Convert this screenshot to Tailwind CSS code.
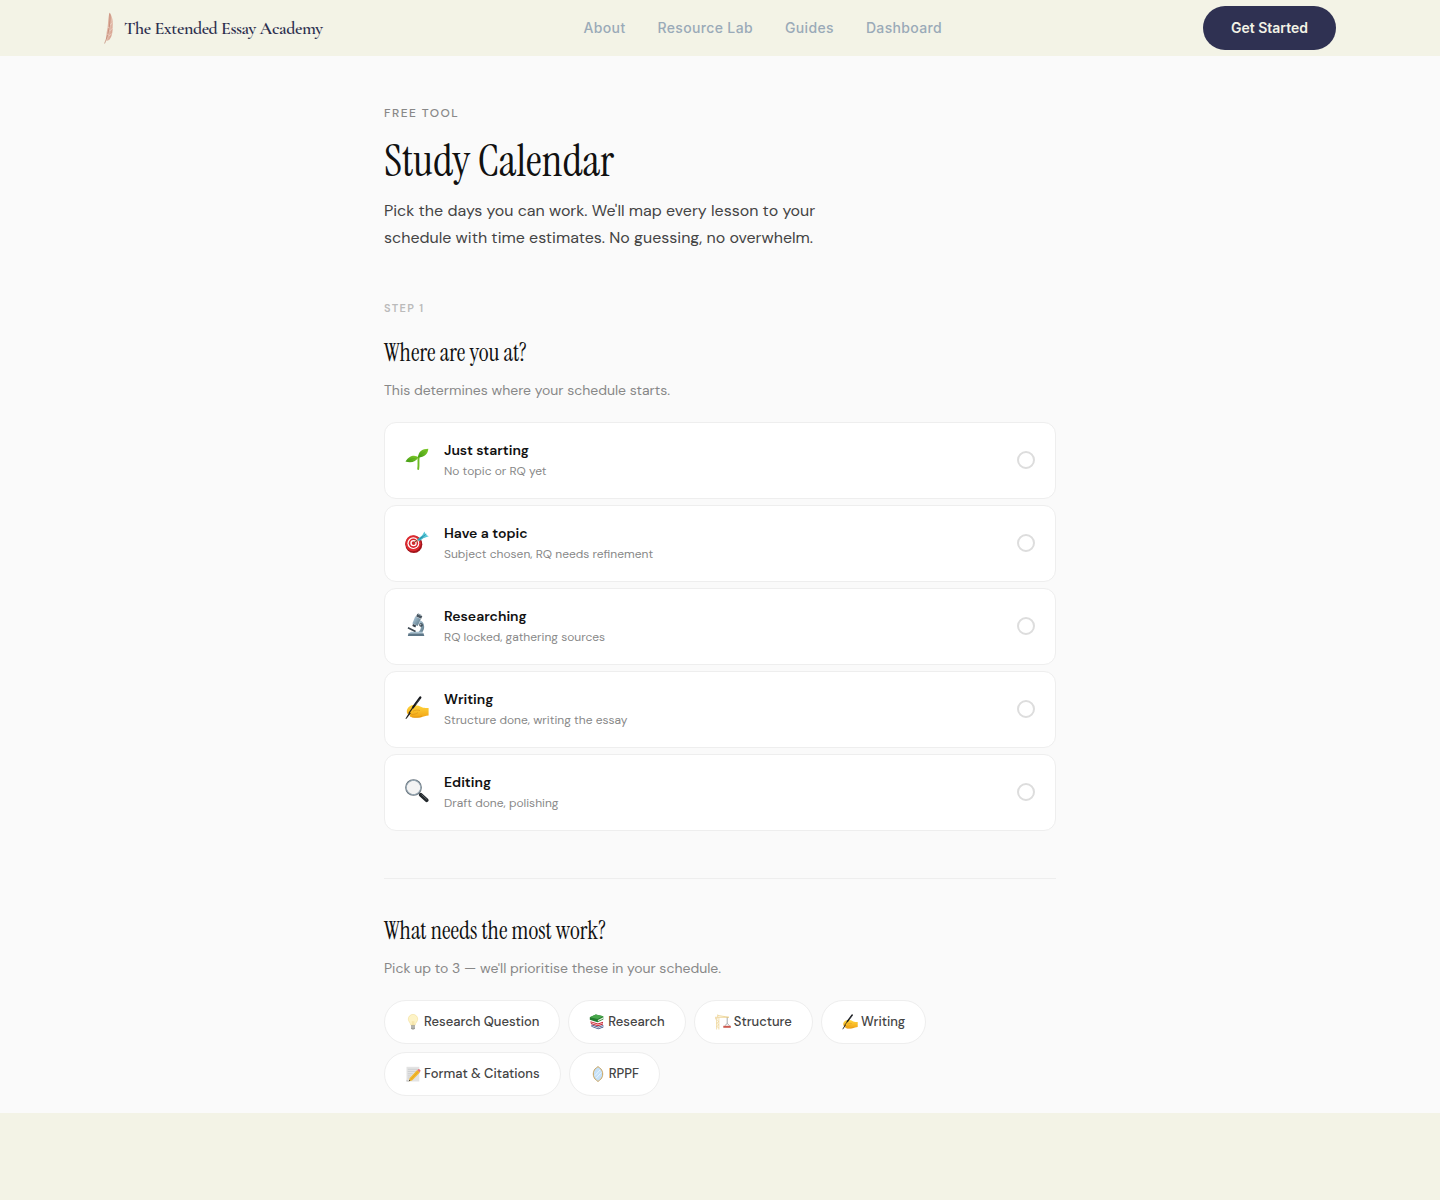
<!DOCTYPE html>
<html lang="en">
<head>
<meta charset="utf-8">
<meta name="viewport" content="width=device-width, initial-scale=1">
<title>Study Calendar – The Extended Essay Academy</title>
<script src="https://cdn.jsdelivr.net/npm/@tailwindcss/browser@4"></script>
</head>
<body class="min-h-screen bg-[#f3f3e6] font-['DM_Sans',Inter,sans-serif] text-[#111111] antialiased">

<!-- Shared artwork -->
<svg class="absolute size-0" aria-hidden="true">
  <defs>
    <linearGradient id="leaf" x1="0" y1="1" x2="1" y2="0"><stop offset="0" stop-color="#3f9a12"/><stop offset="1" stop-color="#86cf2c"/></linearGradient>
    <linearGradient id="skin" x1="0" y1="0" x2="0" y2="1"><stop offset="0" stop-color="#ffd53d"/><stop offset="1" stop-color="#f2a414"/></linearGradient>
    <linearGradient id="steel" x1="0" y1="0" x2="1" y2="1"><stop offset="0" stop-color="#b9d3e4"/><stop offset="1" stop-color="#54707f"/></linearGradient>
    <linearGradient id="feather" x1="0" y1="0" x2="1" y2="1"><stop offset="0" stop-color="#d39a86"/><stop offset="0.55" stop-color="#e3bdac"/><stop offset="1" stop-color="#c98571"/></linearGradient>
  </defs>
  <symbol id="writing" viewBox="0 0 24 24">
    <path d="M2.200 13.200C3.500 10.500 6.500 8.600 9.500 9.200c2.500-.2 5 .6 7.500 2 2 .9 4 .6 6.600.7v7.700c-3 .1-5 1.400-8 1.800-3.600.5-7.800.5-9.800-.4-1.200-.6-1.300-1.600-.4-2.300-2-.1-3.400-.9-3.500-2.200-.1-1.400-.2-2.200.3-3.300z" fill="url(#skin)"/>
    <path d="M8 15.200c2-1.200 4.500-1.500 7-.6M6 18.600c2.500.1 5-.6 7-2M7 21c3.400.5 7 .2 10-.9" fill="none" stroke="#d98f18" stroke-width=".6"/>
    <path d="M15.300 1.500L8 11.300" stroke="#16181c" stroke-width="2.200" stroke-linecap="round"/>
    <path d="M14.800 3.200L10.800 8.600" stroke="#59606a" stroke-width=".6"/>
    <path d="M8 11.300L4 17" stroke="#2a2415" stroke-width="1.200"/>
    <path d="M4.400 16L.4 22.700l1.100.1 4.300-5.500z" fill="#222"/>
  </symbol>
</svg>

<header class="bg-[#f3f3e6]">
  <nav class="mx-auto flex h-14 max-w-7xl items-center justify-between px-6" aria-label="Main">
    <a href="#" class="flex items-center gap-2">
      <svg class="h-8 w-3" viewBox="0 0 12 32" aria-hidden="true">
        <path d="M5.500.4C8.600 4.500 9.400 9.500 8.600 14.500 8.800 19 8.200 24 5.600 27.600 4.400 28.600 3 29 2.400 28.800 1.800 25 2.600 20 3.600 15.500 4.200 10 4.400 4.500 5.500.4z" fill="url(#feather)"/>
        <path d="M5.900 1.500C6.500 10 5 21 .6 31.500" fill="none" stroke="#b5705c" stroke-width=".6"/>
        <path d="M8.600 10.500L6.300 13M8.700 16L5.700 19M8 21.500L4.800 24M3.800 15l1.800 1M2.600 22l1.700.5" stroke="#f6e6dc" stroke-width=".5"/>
      </svg>
      <span class="font-['Cormorant_Garamond','Liberation_Serif',serif] text-lg font-semibold tracking-tight text-[#2d2f4e]">The Extended Essay Academy</span>
    </a>
    <div class="flex items-center gap-8 font-[Inter,sans-serif] text-sm font-medium tracking-wide text-[#9aaab8]">
      <a href="#">About</a>
      <a href="#">Resource Lab</a>
      <a href="#">Guides</a>
      <a href="#">Dashboard</a>
    </div>
    <button type="button" class="h-11 rounded-full bg-[#2f3152] px-7 font-[Inter,sans-serif] text-sm font-semibold text-[#f3f3e6]">Get Started</button>
  </nav>
</header>

<main class="bg-[#fafafa] pt-12 pb-[17px]">
  <div class="mx-auto max-w-2xl">
    <p class="text-xs leading-[18px] font-medium tracking-[0.12em] text-[#888888]">FREE TOOL</p>
    <h1 class="mt-[15px] font-['Instrument_Serif','Liberation_Serif',serif] text-[44px] leading-12">Study Calendar</h1>
    <p class="mt-3 max-w-[480px] text-base leading-[27px] text-[#444444]">Pick the days you can work. We'll map every lesson to your schedule with time estimates. No guessing, no overwhelm.</p>

    <section class="pt-[49px]">
      <p class="text-[11px] leading-4 font-semibold tracking-[0.12em] text-[#bbbbbb]">STEP 1</p>
      <h2 id="stage" class="mt-[21px] font-['Instrument_Serif','Liberation_Serif',serif] text-2xl leading-8">Where are you at?</h2>
      <p class="mt-2.5 text-sm leading-[22px] text-[#888888]">This determines where your schedule starts.</p>

      <div class="mt-[21px] flex flex-col gap-1.5" role="radiogroup" aria-labelledby="stage">
        <label class="flex items-center gap-[15px] rounded-xl border border-[#eeeeee] bg-white px-5 pt-4 pb-[17px]">
          <svg class="mb-0.5 size-6 shrink-0" viewBox="0 0 24 24" aria-hidden="true">
            <path d="M13.800 9.500c-.8 3.500.2 7.500-.6 12.500" fill="none" stroke="#6dbb22" stroke-width="1.900" stroke-linecap="round"/>
            <path d="M13.200 10.500C13 5 17 1.800 23.300 1.800 23.200 7 19 10.600 13.200 10.500z" fill="url(#leaf)"/>
            <path d="M13.300 10.600C11 7.500 4 7.800.5 14.600c5.500 1.600 10.500.4 12.800-4z" fill="url(#leaf)"/>
            <path d="M13.400 10.300C16 7.500 19 5 22.500 2.600M13 10.800c-4 .2-8 1.600-11.500 3.400" fill="none" stroke="#4aa01a" stroke-width=".4"/>
          </svg>
          <span class="flex-1">
            <span class="block text-sm leading-[22px] font-semibold">Just starting</span>
            <span class="block text-xs leading-5 text-[#888888]">No topic or RQ yet</span>
          </span>
          <input type="radio" name="stage" class="size-[18px] shrink-0 appearance-none rounded-full border-2 border-[#dddddd] bg-white checked:border-[#2f3152] checked:bg-[#2f3152]">
        </label>

        <label class="flex items-center gap-[15px] rounded-xl border border-[#eeeeee] bg-white px-5 pt-4 pb-[17px]">
          <svg class="mb-0.5 size-6 shrink-0" viewBox="0 0 24 24" aria-hidden="true">
            <ellipse cx="8.800" cy="14.300" rx="8.500" ry="8.800" fill="#a3141b"/>
            <ellipse cx="8.100" cy="13.300" rx="7.800" ry="8" fill="#dd2a30"/>
            <circle cx="8.300" cy="13.200" r="5.900" fill="#fff"/>
            <circle cx="8.400" cy="13.200" r="4.700" fill="#d8262d"/>
            <circle cx="8.500" cy="13.100" r="3.200" fill="#fff"/>
            <circle cx="8.600" cy="13.100" r="1.900" fill="#d8262d"/>
            <path d="M8.600 13l6-4.600" stroke="#7a5a2a" stroke-width="1"/>
            <path d="M12.500 9.200l5.200-4.100 1.900 2.200-5.300 4z" fill="#3eb3c8"/>
            <path d="M17 5.800l2.400-4.300 1 2.300 1.300-.1-.4 1.400 2.500 1.100-4.800 1.900z" fill="#56c7d8"/>
            <path d="M13.300 10l7.300-5.500" stroke="#1f7f96" stroke-width=".7"/>
          </svg>
          <span class="flex-1">
            <span class="block text-sm leading-[22px] font-semibold">Have a topic</span>
            <span class="block text-xs leading-5 text-[#888888]">Subject chosen, RQ needs refinement</span>
          </span>
          <input type="radio" name="stage" class="size-[18px] shrink-0 appearance-none rounded-full border-2 border-[#dddddd] bg-white checked:border-[#2f3152] checked:bg-[#2f3152]">
        </label>

        <label class="flex items-center gap-[15px] rounded-xl border border-[#eeeeee] bg-white px-5 pt-4 pb-[17px]">
          <svg class="mb-0.5 size-6 shrink-0" viewBox="0 0 24 24" aria-hidden="true">
            <path d="M15.500 7.500c4.500 2 5 9 1 12.500h-4c4-3 4.400-7 1.500-9.500z" fill="url(#steel)"/>
            <path d="M3.500 20.200h15l.8 2.800H2.800z" fill="#5d7687"/>
            <path d="M4 20.200h14.300l-1.300-1.400H6z" fill="#a9c2d1"/>
            <path d="M10.300 3.200l5.600 2.700-3.200 7.200-5.300-2.600z" fill="url(#steel)"/>
            <path d="M12.300.8l5 2.400-1.100 2.600-5-2.300z" fill="#47545f"/>
            <path d="M13.100.3l3.500 1.700-.5 1.100-3.500-1.700z" fill="#8d9ba5"/>
            <path d="M8 11l3.200 1.600-.9 2-3-1.500z" fill="#35414b"/>
            <path d="M3.300 14.100l7.600 3.700-.7 1.400-7.600-3.700z" fill="#3b464f"/>
            <circle cx="16" cy="12" r="1.800" fill="#35414b"/>
            <circle cx="15.700" cy="11.700" r=".8" fill="#b8c6cf"/>
          </svg>
          <span class="flex-1">
            <span class="block text-sm leading-[22px] font-semibold">Researching</span>
            <span class="block text-xs leading-5 text-[#888888]">RQ locked, gathering sources</span>
          </span>
          <input type="radio" name="stage" class="size-[18px] shrink-0 appearance-none rounded-full border-2 border-[#dddddd] bg-white checked:border-[#2f3152] checked:bg-[#2f3152]">
        </label>

        <label class="flex items-center gap-[15px] rounded-xl border border-[#eeeeee] bg-white px-5 pt-4 pb-[17px]">
          <svg class="mb-0.5 size-6 shrink-0" aria-hidden="true"><use href="#writing"/></svg>
          <span class="flex-1">
            <span class="block text-sm leading-[22px] font-semibold">Writing</span>
            <span class="block text-xs leading-5 text-[#888888]">Structure done, writing the essay</span>
          </span>
          <input type="radio" name="stage" class="size-[18px] shrink-0 appearance-none rounded-full border-2 border-[#dddddd] bg-white checked:border-[#2f3152] checked:bg-[#2f3152]">
        </label>

        <label class="flex items-center gap-[15px] rounded-xl border border-[#eeeeee] bg-white px-5 pt-4 pb-[17px]">
          <svg class="mb-0.5 size-6 shrink-0" viewBox="0 0 24 24" aria-hidden="true">
            <path d="M13.800 13.800l2.300 2.200" stroke="#8b969e" stroke-width="1.800"/>
            <path d="M15.800 15.800l5.800 5.400" stroke="#22272b" stroke-width="3.800" stroke-linecap="round"/>
            <path d="M16.500 15.600l5.300 4.900" stroke="#727c84" stroke-width=".7"/>
            <circle cx="8.500" cy="8.500" r="7.600" fill="#f3f3f3" stroke="#65717a" stroke-width="1.500"/>
            <circle cx="8.500" cy="8.500" r="7.200" fill="none" stroke="#adc0cd" stroke-width=".7"/>
          </svg>
          <span class="flex-1">
            <span class="block text-sm leading-[22px] font-semibold">Editing</span>
            <span class="block text-xs leading-5 text-[#888888]">Draft done, polishing</span>
          </span>
          <input type="radio" name="stage" class="size-[18px] shrink-0 appearance-none rounded-full border-2 border-[#dddddd] bg-white checked:border-[#2f3152] checked:bg-[#2f3152]">
        </label>
      </div>
    </section>

    <section class="mt-[47px] border-t border-[#eeeeee] pt-9">
      <h2 id="focus" class="font-['Instrument_Serif','Liberation_Serif',serif] text-2xl leading-8">What needs the most work?</h2>
      <p class="mt-2.5 text-sm leading-[22px] text-[#888888]">Pick up to 3 — we'll prioritise these in your schedule.</p>

      <div class="mt-[21px] flex flex-wrap gap-2 text-[13px] font-medium text-[#444444]" role="group" aria-labelledby="focus">
        <button type="button" class="flex h-11 items-center gap-[3px] rounded-full border border-[#eeeeee] bg-white px-5">
          <svg class="size-4" viewBox="0 0 16 16" aria-hidden="true">
            <path d="M8 .4a4.700 4.700 0 0 0-4.700 4.700c0 2.400 2.100 3.400 2.600 6.100h4.200c.5-2.700 2.600-3.700 2.600-6.100A4.700 4.700 0 0 0 8 .4z" fill="#fdf3c6" stroke="#efd98b" stroke-width=".5"/>
            <path d="M7.300 7.200v4M8.800 7.200v4" fill="none" stroke="#e6c470" stroke-width=".4"/>
            <path d="M6 11.200h4v3L9 15.600H7l-1-1.400z" fill="#9b9b96"/>
            <path d="M6 12.400h4M6 13.700h4" stroke="#d4d4d0" stroke-width=".5"/>
          </svg>
          Research Question
        </button>
        <button type="button" class="flex h-11 items-center gap-[3px] rounded-full border border-[#eeeeee] bg-white px-5">
          <svg class="size-4" viewBox="0 0 16 16" aria-hidden="true">
            <path d="M2.500 10.500l7 2.200 4.800-1.600v2.400l-5 1.800-6.800-2.500z" fill="#3b4f86"/>
            <path d="M3 11.400l6.300 2.100 4.700-1.600v.8l-4.700 1.700L3 12.300z" fill="#e4e7ee"/>
            <path d="M1.400 7.300l7.400 2.200 5.200-1.800v2.700l-5 1.800-7-2.200z" fill="#c8202f"/>
            <path d="M2.200 8.300l6.700 2.100 5-1.700v.8l-5 1.700-6.500-2z" fill="#f3dede"/>
            <path d="M.8 3.200L6.800.6l7.500 1.700v3.200L8.500 8.300.8 5.700z" fill="#237c2f"/>
            <path d="M.8 3.200L6.800.6l7.500 1.700-5.600 2.800z" fill="#49a84c"/>
            <path d="M8.900 5.900l5.400-2.600v1.400L8.900 7.300z" fill="#e4f0de"/>
          </svg>
          Research
        </button>
        <button type="button" class="flex h-11 items-center gap-[3px] rounded-full border border-[#eeeeee] bg-white px-5">
          <svg class="size-4" viewBox="0 0 16 16" aria-hidden="true">
            <path d="M1.600 3.500v12M3.900 3.500v12" stroke="#ecd08a" stroke-width=".7"/>
            <path d="M1.600 6l2.300 1.600-2.300 1.600 2.300 1.600-2.300 1.600 2.300 1.600" fill="none" stroke="#edd28b" stroke-width=".6"/>
            <path d="M0 3.300h14M3 1.500L14 3.300M2.700.5v3" fill="none" stroke="#ecd08a" stroke-width=".8"/>
            <path d="M.1 3h2.400v2.400H.1z" fill="#f1ddb1"/>
            <path d="M12.200 3.500v6M12.200 9.500l-2.500 2.300M12.200 9.500l2.500 2.300" stroke="#6d7378" stroke-width=".6"/>
            <path d="M8.300 11.800h7.500v2H8.300z" fill="#cc5a50"/>
          </svg>
          Structure
        </button>
        <button type="button" class="flex h-11 items-center gap-[3px] rounded-full border border-[#eeeeee] bg-white px-5">
          <svg class="size-4" aria-hidden="true"><use href="#writing"/></svg>
          Writing
        </button>
        <button type="button" class="flex h-11 items-center gap-[3px] rounded-full border border-[#eeeeee] bg-white px-5">
          <svg class="size-4" viewBox="0 0 16 16" aria-hidden="true">
            <path d="M1.500.8h12.800v14.700H1.500z" fill="#e3e3e3"/>
            <path d="M2.800 3.300h9.500M2.800 5.500h9M2.800 7.700h5M2.800 9.900h3M2.800 12h2" stroke="#b9bcc0" stroke-width=".5"/>
            <path d="M1.500 13.800V15.500h3z" fill="#c4c4c4"/>
            <path d="M12.200 4.100l2.700 2.300-7.800 8.100-3.300.8.900-3.200z" fill="#f3b82c"/>
            <path d="M13.500 5.200L5.800 13.500" stroke="#d89a1c" stroke-width=".6"/>
            <path d="M12.200 4.100l1.100-.9c.8-.5 2.500.9 2.200 1.900l-.8 1.200z" fill="#e6747a"/>
            <path d="M4.300 13.700l-.5 1.600 1.600-.5z" fill="#333"/>
          </svg>
          Format &amp; Citations
        </button>
        <button type="button" class="flex h-11 items-center gap-[3px] rounded-full border border-[#eeeeee] bg-white px-5">
          <svg class="size-4" viewBox="0 0 16 16" aria-hidden="true">
            <path d="M8 .6c1 1.200 2 1.200 2.800 2.200 1.300 1.600 1.900 3.300 1.900 5.200s-.6 3.600-1.900 5.200C10 14.200 9 14.300 8 15.500c-1-1.200-2-1.300-2.800-2.300C3.900 11.600 3.300 9.900 3.300 8s.6-3.600 1.900-5.200C6 1.800 7 1.800 8 .6z" fill="#c5e1f8" stroke="#c69a4b" stroke-width=".9"/>
            <path d="M5 9.500l5-5.500M6.300 12l5-5.500" stroke="#e9f5ff" stroke-width="1"/>
          </svg>
          RPPF
        </button>
      </div>
    </section>
  </div>
</main>

</body>
</html>
